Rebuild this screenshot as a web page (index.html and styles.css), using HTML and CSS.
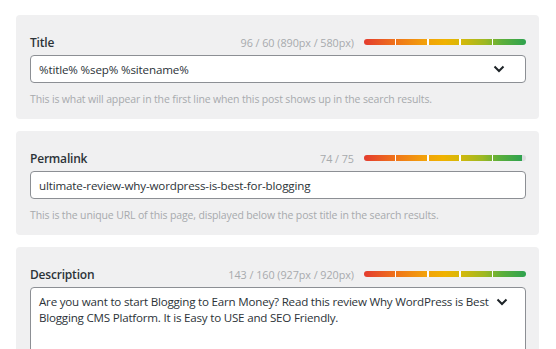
FILE: index.html
```html
<!DOCTYPE html>
<html>
<head>
<meta charset="utf-8">
<link rel="stylesheet" href="styles.css">
</head>
<body>
<div class="page">
  <section class="card">
    <div class="head">
      <label class="label">Title</label>
      <div class="meta">
        <span class="count">96 / 60 (890px / 580px)</span>
        <div class="bar"><div class="fill" style="width:100%"></div><i></i><i></i><i></i><i></i></div>
      </div>
    </div>
    <div class="input with-toggle">
      <span class="value">%title% %sep% %sitename%</span>
      <svg class="chev" width="12" height="8" viewBox="0 0 12 8"><path d="M1.5 1.5 L6 6 L10.5 1.5" fill="none" stroke="#1d2327" stroke-width="2"/></svg>
    </div>
    <p class="help">This is what will appear in the first line when this post shows up in the search results.</p>
  </section>

  <section class="card">
    <div class="head">
      <label class="label">Permalink</label>
      <div class="meta">
        <span class="count">74 / 75</span>
        <div class="bar"><div class="fill" style="width:97.5%"></div><i></i><i></i><i></i><i></i></div>
      </div>
    </div>
    <div class="input">
      <span class="value">ultimate-review-why-wordpress-is-best-for-blogging</span>
    </div>
    <p class="help">This is the unique URL of this page, displayed below the post title in the search results.</p>
  </section>

  <section class="card">
    <div class="head">
      <label class="label">Description</label>
      <div class="meta">
        <span class="count">143 / 160 (927px / 920px)</span>
        <div class="bar"><div class="fill" style="width:100%"></div><i></i><i></i><i></i><i></i></div>
      </div>
    </div>
    <div class="input textarea with-toggle">
      <span class="value">Are you want to start Blogging to Earn Money? Read this review Why WordPress is Best Blogging CMS Platform. It is Easy to USE and SEO Friendly.</span>
      <svg class="chev" width="12" height="8" viewBox="0 0 12 8"><path d="M1.5 1.5 L6 6 L10.5 1.5" fill="none" stroke="#1d2327" stroke-width="2"/></svg>
    </div>
  </section>
</div>
</body>
</html>
```

FILE: styles.css
```css
* { box-sizing: border-box; }
html, body { margin: 0; background: #fff; }
body {
  font-family: "Open Sans", "Noto Sans", sans-serif;
  color: #1d2327;
  overflow: hidden;
  height: 349px;
}
.page {
  padding: 15px 17px 0 16px;
  display: flex;
  flex-direction: column;
  gap: 12px;
}
.card {
  background: #f0f0f1;
  border-radius: 4px;
  padding: 17px 13px 12px 14px;
}
.head {
  display: flex;
  justify-content: space-between;
  align-items: center;
  height: 20px;
  margin-bottom: 3px;
}
.label {
  font-size: 12px;
  font-weight: 600;
  letter-spacing: -0.2px;
  color: #2c3338;
}
.meta {
  display: flex;
  align-items: center;
  gap: 10px;
}
.count {
  font-size: 10.8px;
  letter-spacing: -0.05px;
  color: #a7aaad;
}
.bar {
  position: relative;
  width: 162px;
  height: 6px;
  border-radius: 3px;
  background: #dcdcde;
  overflow: hidden;
}
.bar .fill {
  height: 100%;
  background: linear-gradient(90deg, #e43c2f 0%, #f07a18 22%, #f2a10b 38%, #f0b200 50%, #d6b80a 60%, #9cb823 75%, #5daf3a 85%, #2ea24f 100%);
}
.bar i {
  position: absolute;
  top: 0;
  width: 1.5px;
  height: 100%;
  background: #fff;
}
.bar i:nth-of-type(1) { left: 30.5px; }
.bar i:nth-of-type(2) { left: 63px; }
.bar i:nth-of-type(3) { left: 95px; }
.bar i:nth-of-type(4) { left: 127.5px; }
.input {
  background: #fff;
  border: 1px solid #8c8f94;
  border-radius: 4px;
  height: 28px;
  display: flex;
  align-items: center;
  padding: 0 20px 0 8px;
  font-size: 11.6px;
  letter-spacing: -0.15px;
  color: #2c3338;
}
.input .value { flex: 1; }
.with-toggle .chev { flex: none; margin-left: 8px; }
.textarea {
  height: 80px;
  align-items: flex-start;
  padding: 6px 17px 0 8px;
  line-height: 16px;
  letter-spacing: -0.21px;
}
.textarea .chev { margin-top: 4px; margin-left: 3px; }
.help {
  margin: 0;
  padding-top: 8px;
  font-size: 10.5px;
  letter-spacing: -0.14px;
  line-height: 16px;
  color: #a7aaad;
}
```
